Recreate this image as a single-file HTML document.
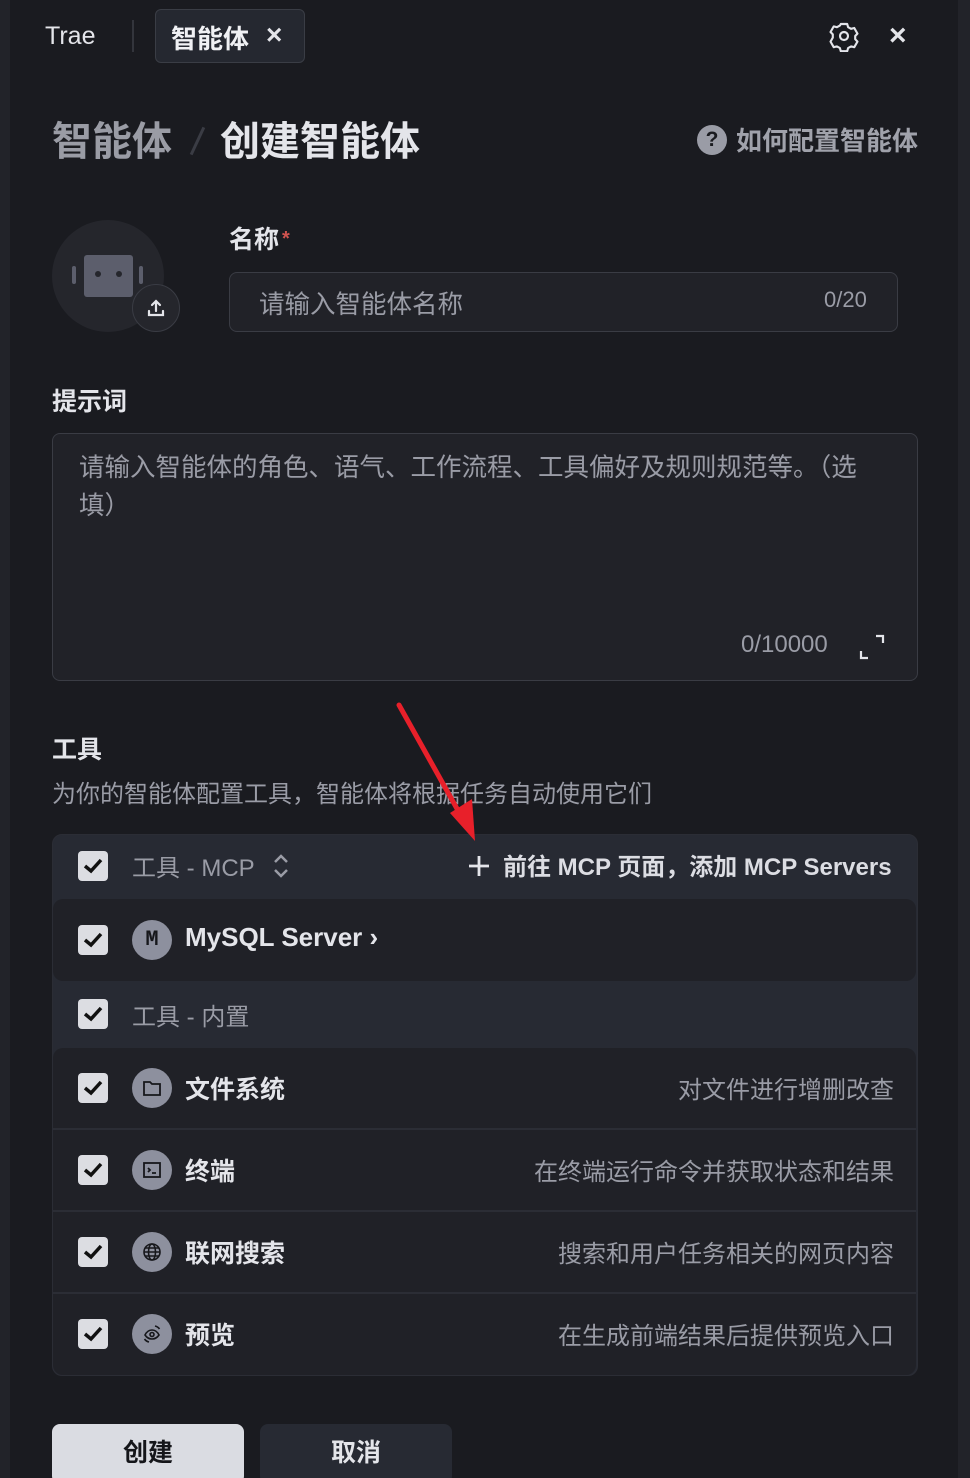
<!DOCTYPE html>
<html><head><meta charset="utf-8"><style>
*{margin:0;padding:0;box-sizing:border-box}
html{width:970px;height:1478px;overflow:hidden}
body{width:970px;height:1478px;background:#1a1b20;position:relative;overflow:hidden;font-family:"Liberation Sans","Noto Sans CJK SC",sans-serif;color:#e4e5ea}
.a{position:absolute;white-space:nowrap}
.cb{position:absolute;left:78px;width:30px;height:30px;background:#dcdde2;border-radius:4px}
.cb svg{position:absolute;left:4px;top:5px}
.ic{position:absolute;left:132px;width:40px;height:40px;border-radius:50%;background:#8d909e}
.ic svg{position:absolute;left:10px;top:10px}
.row{position:absolute;left:53px;width:863px;background:#202127}
.nm{position:absolute;left:185px;font-size:25px;font-weight:bold;color:#e4e5ea}
.ds{position:absolute;right:76px;font-size:24px;color:#9a9ca6}
</style></head><body>
<div class="a" style="left:0;top:0;width:10px;height:1478px;background:#222329"></div>
<div class="a" style="left:958px;top:0;width:12px;height:1478px;background:#222329"></div>

<div class="a" style="left:45px;top:22px;font-size:25px;color:#e4e5ea">Trae</div>
<div class="a" style="left:132px;top:20px;width:2px;height:32px;background:#33353c"></div>
<div class="a" style="left:155px;top:9px;width:150px;height:54px;background:#252830;border:1px solid #3a3d45;border-radius:6px"></div>
<div class="a" style="left:171px;top:19px;font-size:26px;font-weight:bold;color:#f0f1f4">智能体</div>
<div class="a" style="left:266px;top:19px;font-size:28px;font-weight:bold;color:#e4e5ea">×</div>
<svg class="a" style="left:828px;top:20px" width="32" height="32" viewBox="0 0 24 24" fill="none" stroke="#e4e5ea" stroke-width="1.6" stroke-linejoin="round"><path d="M9.6 3h4.8l.7 2.4 2.2 1.2 2.4-.6 2.4 4.2-1.7 1.8v2.4l1.7 1.8-2.4 4.2-2.4-.6-2.2 1.2-.7 2.4H9.6l-.7-2.4-2.2-1.2-2.4.6-2.4-4.2L3.6 13.2v-2.4L1.9 9 4.3 4.8l2.4.6 2.2-1.2z"/><circle cx="12" cy="12" r="3"/></svg>
<div class="a" style="left:889px;top:19px;font-size:30px;font-weight:bold;color:#e4e5ea">×</div>

<div class="a" style="left:52px;top:109px;font-size:40px;font-weight:bold;color:#9a9ca5">智能体</div>
<div class="a" style="left:196px;top:126px;width:3px;height:30px;background:#3a3c44;transform:rotate(25deg)"></div>
<div class="a" style="left:220px;top:109px;font-size:40px;font-weight:bold;color:#e4e5ea">创建智能体</div>
<div class="a" style="left:697px;top:125px;width:30px;height:30px;border-radius:50%;background:#9a9ca6;color:#1a1b20;font-size:21px;font-weight:bold;text-align:center;line-height:30px">?</div>
<div class="a" style="left:736px;top:121px;font-size:26px;font-weight:bold;color:#a0a2ab">如何配置智能体</div>

<div class="a" style="left:52px;top:220px;width:112px;height:112px;border-radius:50%;background:#25262c"></div>
<div class="a" style="left:84px;top:255px;width:49px;height:42px;background:#5c5e6c;border-radius:3px"></div>
<div class="a" style="left:72px;top:266px;width:4px;height:18px;background:#5c5e6c;border-radius:2px"></div>
<div class="a" style="left:139px;top:266px;width:4px;height:18px;background:#5c5e6c;border-radius:2px"></div>
<div class="a" style="left:95px;top:271px;width:6px;height:6px;background:#25262c;border-radius:50%"></div>
<div class="a" style="left:116px;top:271px;width:6px;height:6px;background:#25262c;border-radius:50%"></div>
<div class="a" style="left:132px;top:284px;width:48px;height:48px;border-radius:50%;background:#25262c;border:1px solid #3a3c44"></div>
<svg class="a" style="left:145px;top:297px" width="22" height="22" viewBox="0 0 22 22" fill="none" stroke="#e4e5ea" stroke-width="2.2" stroke-linecap="round"><path d="M11 14V4M7 8l4-4 4 4M4 14v4h14v-4"/></svg>

<div class="a" style="left:229px;top:220px;font-size:25px;font-weight:bold;color:#e4e5ea">名称<span style="color:#d0534f;font-size:20px;margin-left:3px;position:relative;top:-3px">*</span></div>
<div class="a" style="left:229px;top:272px;width:669px;height:60px;background:#212228;border:1px solid #3a3c44;border-radius:8px"></div>
<div class="a" style="left:259px;top:284px;font-size:25.5px;color:#9a9ca6">请输入智能体名称</div>
<div class="a" style="left:824px;top:287px;font-size:22px;color:#9a9ca6">0/20</div>

<div class="a" style="left:52px;top:382px;font-size:25px;font-weight:bold;color:#e4e5ea">提示词</div>
<div class="a" style="left:52px;top:433px;width:866px;height:248px;background:#212228;border:1px solid #3a3c44;border-radius:8px"></div>
<div class="a" style="left:79px;top:449px;font-size:25.5px;color:#9a9ca6;line-height:38px;white-space:normal;width:810px">请输入智能体的角色、语气、工作流程、工具偏好及规则规范等。（选填）</div>
<div class="a" style="left:741px;top:631px;font-size:24px;color:#9a9ca6">0/10000</div>
<svg class="a" style="left:858px;top:633px" width="28" height="28" viewBox="0 0 28 28" fill="none" stroke="#e4e5ea" stroke-width="2.2"><path d="M18 3h7v7M3 18v7h7"/></svg>

<div class="a" style="left:52px;top:730px;font-size:25px;font-weight:bold;color:#e4e5ea">工具</div>
<div class="a" style="left:52px;top:774px;font-size:24px;color:#9a9ca6">为你的智能体配置工具，智能体将根据任务自动使用它们</div>

<div class="a" style="left:52px;top:834px;width:866px;height:542px;background:#272a33;border-radius:10px;border:1px solid #2b2d35"></div>
<div class="cb" style="top:851px"><svg width="22" height="20" viewBox="0 0 22 20"><path d="M3 10l6 5 10-11" fill="none" stroke="#111" stroke-width="3.5"/></svg></div>
<div class="a" style="left:132px;top:848px;font-size:24px;color:#9a9ca6">工具 - MCP</div>
<svg class="a" style="left:271px;top:853px" width="20" height="26" viewBox="0 0 20 26" fill="none" stroke="#9a9ca6" stroke-width="2.5"><path d="M4 9l6-6 6 6M4 17l6 6 6-6"/></svg>
<svg class="a" style="left:467px;top:854px" width="24" height="24" viewBox="0 0 24 24" stroke="#e4e5ea" stroke-width="2.8"><path d="M12 2v20M2 12h20"/></svg>
<div class="a" style="left:503px;top:847px;font-size:24px;font-weight:bold;color:#dcdde3">前往 MCP 页面，添加 MCP Servers</div>

<div class="row" style="top:899px;height:82px;border-radius:10px"></div>
<div class="cb" style="top:925px"><svg width="22" height="20" viewBox="0 0 22 20"><path d="M3 10l6 5 10-11" fill="none" stroke="#111" stroke-width="3.5"/></svg></div>
<div class="ic" style="top:920px;color:#16171b;font-family:'Liberation Mono',monospace;font-weight:bold;font-size:22px;text-align:center;line-height:40px">M</div>
<div class="nm" style="top:922px;font-size:26px">MySQL Server ›</div>

<div class="cb" style="top:999px"><svg width="22" height="20" viewBox="0 0 22 20"><path d="M3 10l6 5 10-11" fill="none" stroke="#111" stroke-width="3.5"/></svg></div>
<div class="a" style="left:132px;top:997px;font-size:24px;color:#9a9ca6">工具 - 内置</div>

<div class="row" style="top:1048px;height:327px;border-radius:10px"></div>
<div class="a" style="left:53px;top:1128px;width:863px;height:2px;background:#2b2d35"></div>
<div class="a" style="left:53px;top:1210px;width:863px;height:2px;background:#2b2d35"></div>
<div class="a" style="left:53px;top:1292px;width:863px;height:2px;background:#2b2d35"></div>

<div class="cb" style="top:1073px"><svg width="22" height="20" viewBox="0 0 22 20"><path d="M3 10l6 5 10-11" fill="none" stroke="#111" stroke-width="3.5"/></svg></div>
<div class="ic" style="top:1068px"><svg width="20" height="20" viewBox="0 0 20 20" fill="none" stroke="#16171b" stroke-width="1.8"><path d="M2 4h6l2 2h8v11H2z"/></svg></div>
<div class="nm" style="top:1070px">文件系统</div>
<div class="ds" style="top:1070px">对文件进行增删改查</div>

<div class="cb" style="top:1155px"><svg width="22" height="20" viewBox="0 0 22 20"><path d="M3 10l6 5 10-11" fill="none" stroke="#111" stroke-width="3.5"/></svg></div>
<div class="ic" style="top:1150px"><svg width="20" height="20" viewBox="0 0 20 20" fill="none" stroke="#16171b" stroke-width="1.8"><rect x="2" y="3" width="16" height="14"/><path d="M6 8l2 2-2 2M10 13h4"/></svg></div>
<div class="nm" style="top:1152px">终端</div>
<div class="ds" style="top:1152px">在终端运行命令并获取状态和结果</div>

<div class="cb" style="top:1237px"><svg width="22" height="20" viewBox="0 0 22 20"><path d="M3 10l6 5 10-11" fill="none" stroke="#111" stroke-width="3.5"/></svg></div>
<div class="ic" style="top:1232px"><svg width="20" height="20" viewBox="0 0 20 20" fill="none" stroke="#16171b" stroke-width="1.6"><circle cx="10" cy="10" r="8"/><ellipse cx="10" cy="10" rx="3.5" ry="8"/><path d="M2 10h16M3.5 6h13M3.5 14h13"/></svg></div>
<div class="nm" style="top:1234px">联网搜索</div>
<div class="ds" style="top:1234px">搜索和用户任务相关的网页内容</div>

<div class="cb" style="top:1319px"><svg width="22" height="20" viewBox="0 0 22 20"><path d="M3 10l6 5 10-11" fill="none" stroke="#111" stroke-width="3.5"/></svg></div>
<div class="ic" style="top:1314px"><svg width="20" height="20" viewBox="0 0 20 20" fill="none" stroke="#16171b" stroke-width="1.6"><path d="M3 11c2-4 5-5 7-5s5 1 7 5c-2 3-5 4-7 4s-5-1-7-4z"/><circle cx="10" cy="10.5" r="2"/><path d="M13 2c2 .5 3.5 1.5 4.5 3M7 18c-2-.5-3.5-1.5-4.5-3"/></svg></div>
<div class="nm" style="top:1316px">预览</div>
<div class="ds" style="top:1316px">在生成前端结果后提供预览入口</div>

<div class="a" style="left:52px;top:1424px;width:192px;height:60px;background:#dadce2;border-radius:8px;color:#15161a;font-size:25px;font-weight:bold;text-align:center;line-height:58px">创建</div>
<div class="a" style="left:260px;top:1424px;width:192px;height:60px;background:#272a33;border-radius:8px;color:#e4e5ea;font-size:25px;font-weight:bold;text-align:center;line-height:58px">取消</div>

<svg class="a" style="left:390px;top:695px" width="100" height="150" viewBox="0 0 100 150"><path d="M9 10L75 128" stroke="#e8202a" stroke-width="5" stroke-linecap="round"/><path d="M60 118L85 146L82 104z" fill="#e8202a"/></svg>
</body></html>
